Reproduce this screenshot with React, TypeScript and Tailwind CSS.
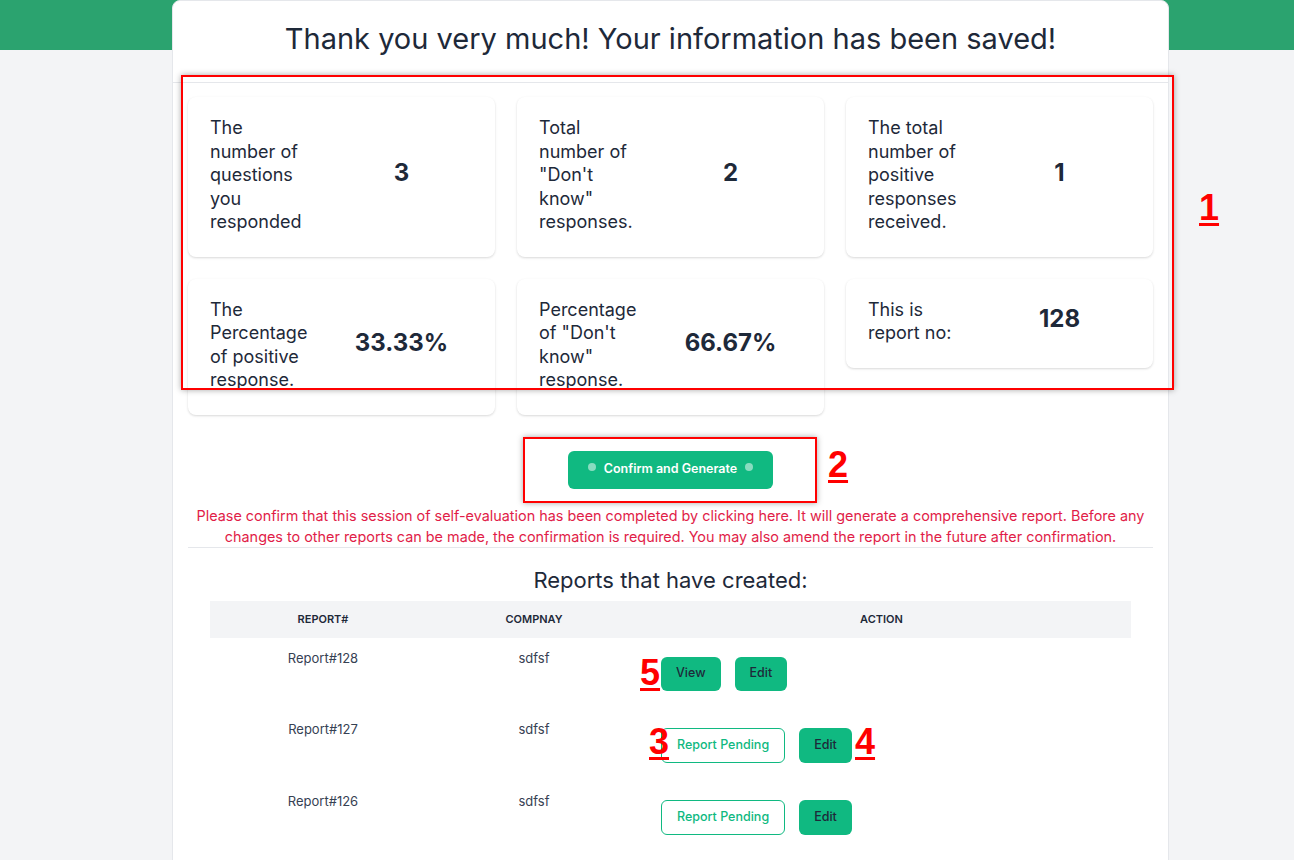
import React from 'react'

const stats = [
  { label: 'The number of questions you responded', value: '3' },
  { label: 'Total number of "Don\'t know" responses.', value: '2' },
  { label: 'The total number of positive responses received.', value: '1' },
  { label: 'The Percentage of positive response.', value: '33.33%' },
  { label: 'Percentage of "Don\'t know" response.', value: '66.67%' },
  { label: 'This is report no:', value: '128' },
]

const reports = [
  { id: 'Report#128', company: 'sdfsf', done: true },
  { id: 'Report#127', company: 'sdfsf', done: false },
  { id: 'Report#126', company: 'sdfsf', done: false },
]

function StatCard({ label, value }: { label: string; value: string }) {
  return (
    <div className="flex items-center rounded-lg bg-white pt-[19px] pb-[23px] pl-[22px] shadow-[0_1px_3px_rgba(0,0,0,0.1),0_1px_2px_rgba(0,0,0,0.06)]">
      <div className="w-[92px] shrink-0 text-lg leading-[23.5px] text-gray-800">{label}</div>
      <div className="mb-[4px] flex-1 pl-[6px] text-center text-2xl font-bold text-gray-800">{value}</div>
    </div>
  )
}

function Mark({ n, className }: { n: string; className: string }) {
  return (
    <div
      className={`absolute font-['Liberation_Sans',Arial,sans-serif] text-[36px] leading-none font-bold text-[#ff0000] underline decoration-[3px] underline-offset-[3px] ${className}`}
    >
      {n}
    </div>
  )
}

export default function App() {
  return (
    <div className="relative min-h-screen bg-[#f3f4f6] font-['Inter','Noto_Sans',sans-serif]">
      <div className="absolute inset-x-0 top-0 h-[50px] bg-[#2ba36f]" />

      <div className="relative ml-[172px] w-[997px] rounded-t-lg border border-gray-200 bg-white px-[15px] pb-10">
        <h1 className="pt-5 text-center text-[29px] leading-9 text-gray-800">
          Thank you very much! Your information has been saved!
        </h1>
        <div className="-mx-[15px] mt-[25px] border-t border-gray-200" />

        <div className="mt-[14px] grid grid-cols-3 items-start gap-[22px]">
          {stats.map((s) => (
            <StatCard key={s.label} label={s.label} value={s.value} />
          ))}
        </div>

        <div className="mt-9 flex justify-center">
          <button className="flex h-[38px] items-center gap-2 rounded-md bg-[#10b981] px-5 text-[12.5px] font-semibold text-white">
            <span className="h-2 w-2 -translate-y-[3px] rounded-full bg-white/50" />
            Confirm and Generate
            <span className="h-2 w-2 -translate-y-[3px] rounded-full bg-white/50" />
          </button>
        </div>

        <p className="mt-[16px] text-center text-[14.4px] leading-[21px] text-[#e11d48]">
          Please confirm that this session of self-evaluation has been completed by clicking here. It will generate a
          comprehensive report. Before any changes to other reports can be made, the confirmation is required. You may
          also amend the report in the future after confirmation.
        </p>
        <div className="border-t border-gray-200" />

        <h2 className="mt-[18px] text-center text-[22px] leading-7 text-gray-800">Reports that have created:</h2>

        <div className="mx-[22px] mt-[7px]">
          <table className="w-full border-collapse">
            <thead>
              <tr className="bg-gray-100">
                <th className="h-[37px] w-[226px] text-center text-[11px] font-semibold uppercase text-gray-800">
                  Report#
                </th>
                <th className="h-[37px] w-[196px] text-center text-[11px] font-semibold uppercase text-gray-800">
                  Compnay
                </th>
                <th className="h-[37px] text-center text-[11px] font-semibold uppercase text-gray-800">Action</th>
              </tr>
            </thead>
            <tbody>
              {reports.map((r) => (
                <tr key={r.id}>
                  <td className="pt-[10px] text-center align-top text-[13px] leading-5 text-gray-700">{r.id}</td>
                  <td className="pt-[10px] text-center align-top text-[13px] leading-5 text-gray-700">{r.company}</td>
                  <td className="pt-[19px] pb-[18px] pl-[29px] align-top">
                    <div className="flex gap-[14px]">
                      {r.done ? (
                        <>
                          <button className="h-[34px] rounded-md bg-[#10b981] px-[15px] text-[12.5px] font-medium text-gray-800">
                            View
                          </button>
                          <button className="h-[34px] rounded-md bg-[#10b981] px-[15px] text-[12.5px] font-medium text-gray-800">
                            Edit
                          </button>
                        </>
                      ) : (
                        <>
                          <button className="h-[35px] rounded-md border border-[#10b981] bg-white px-[15px] text-[12.5px] font-medium text-[#10b981]">
                            Report Pending
                          </button>
                          <button className="h-[35px] rounded-md bg-[#10b981] px-[15px] text-[12.5px] font-medium text-gray-800">
                            Edit
                          </button>
                        </>
                      )}
                    </div>
                  </td>
                </tr>
              ))}
            </tbody>
          </table>
        </div>
      </div>

      {/* annotations */}
      <div className="pointer-events-none absolute inset-0">
        <div className="absolute left-[181px] top-[75px] h-[315px] w-[993px] border-2 border-[#ff0000] shadow-[0_0_6px_rgba(0,0,0,0.35)]" />
        <div className="absolute left-[523px] top-[437px] h-[66px] w-[294px] border-2 border-[#ff0000] shadow-[0_0_6px_rgba(0,0,0,0.35)]" />
        <Mark n="1" className="left-[1199px] top-[190px]" />
        <Mark n="2" className="left-[828px] top-[447px]" />
        <Mark n="5" className="left-[640px] top-[655px]" />
        <Mark n="3" className="left-[649px] top-[724px]" />
        <Mark n="4" className="left-[855px] top-[724px]" />
      </div>
    </div>
  )
}
